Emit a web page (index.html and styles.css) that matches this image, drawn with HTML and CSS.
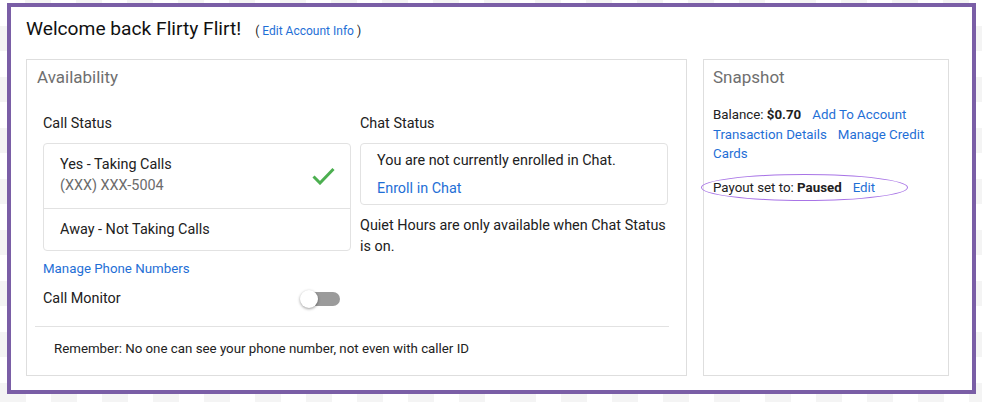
FILE: index.html
```html
<!DOCTYPE html>
<html lang="en">
<head>
<meta charset="utf-8">
<title>Welcome back</title>
<link rel="stylesheet" href="styles.css">
</head>
<body>
<div class="frame">
  <header class="welcome">
    <h1 class="title">Welcome back Flirty Flirt!</h1>
    <span class="edit">( <a class="link" href="#">Edit Account Info</a> )</span>
  </header>
  <div class="cards">
    <section class="card availability">
      <h2 class="card-title">Availability</h2>
      <div class="cols">
        <div class="col">
          <div class="label">Call Status</div>
          <div class="optbox">
            <div class="opt opt-first">
              <div class="opt-text">
                <div>Yes - Taking Calls</div>
                <div class="muted">(XXX) XXX-5004</div>
              </div>
              <svg class="check" width="23" height="18" viewBox="0 0 23 18"><path d="M1.5 9.5 L8 16 L21.5 2" fill="none" stroke="#4caf50" stroke-width="3"/></svg>
            </div>
            <div class="opt opt-second">Away - Not Taking Calls</div>
          </div>
          <a class="link manage" href="#">Manage Phone Numbers</a>
          <div class="monitor">
            <span>Call Monitor</span>
            <span class="toggle"><span class="knob"></span></span>
          </div>
        </div>
        <div class="col">
          <div class="label">Chat Status</div>
          <div class="chatbox">
            <div>You are not currently enrolled in Chat.</div>
            <a class="link enroll" href="#">Enroll in Chat</a>
          </div>
          <p class="quiet">Quiet Hours are only available when Chat Status is on.</p>
        </div>
      </div>
      <div class="divider"></div>
      <p class="remember">Remember: No one can see your phone number, not even with caller ID</p>
    </section>
    <section class="card snapshot">
      <h2 class="card-title">Snapshot</h2>
      <div class="snap-lines">
        <span class="item">Balance: <b>$0.70</b></span><a class="link item" href="#">Add To Account</a>
        <a class="link item" href="#">Transaction Details</a><a class="link item" href="#">Manage Credit Cards</a>
      </div>
      <div class="payout">
        <span class="item">Payout set to: <b>Paused</b></span><a class="link" href="#">Edit</a>
        <span class="ring"></span>
      </div>
    </section>
  </div>
</div>
</body>
</html>
```
FILE: styles.css
```css
html, body {
  margin: 0;
  padding: 0;
}
body {
  width: 982px;
  height: 402px;
  overflow: hidden;
  font-family: Roboto, "Liberation Sans", Arial, sans-serif;
  color: #212121;
  background: repeating-conic-gradient(#f4f4f4 0 25%, #ffffff 0 50%) 0 0 / 51px 51px;
}
.frame {
  box-sizing: border-box;
  margin: 3px 0 0 7px;
  width: 969px;
  height: 391px;
  border: 4px solid #7a5ea6;
  background: #fff;
  padding: 10px 23px 14px 15px;
  display: flex;
  flex-direction: column;
}
.welcome {
  display: flex;
  align-items: center;
  height: 24px;
  margin-bottom: 18px;
}
.title {
  margin: 0;
  font-size: 19.2px;
  font-weight: 400;
  line-height: 24px;
  color: #111;
}
.edit {
  margin-left: 14px;
  font-size: 12px;
  line-height: 16px;
  margin-top: 4px;
  color: #222;
}
.link {
  color: #1f6fd6;
  text-decoration: none;
}
.cards {
  display: flex;
  gap: 16px;
  flex: 1;
}
.card {
  box-sizing: border-box;
  border: 1px solid #dedede;
  background: #fff;
}
.availability {
  width: 661px;
  padding: 7px 16px 16px 16px;
}
.snapshot {
  width: 246px;
  padding: 7px 10px 10px 9px;
}
.card-title {
  margin: 0;
  font-size: 17px;
  font-weight: 400;
  line-height: 20px;
  color: #6f6f6f;
}
.availability .card-title {
  margin-left: -6px;
}
.cols {
  display: flex;
  gap: 9px;
  margin-top: 28px;
}
.col {
  width: 308px;
  display: flex;
  flex-direction: column;
  font-size: 14.4px;
}
.label {
  line-height: 18px;
  margin-bottom: 10px;
}
.optbox {
  border: 1px solid #e2e2e2;
  border-radius: 4px;
}
.opt {
  padding: 0 16px;
}
.opt-first {
  display: flex;
  align-items: center;
  justify-content: space-between;
  padding-top: 11px;
  padding-bottom: 12px;
  line-height: 20.5px;
  border-bottom: 1px solid #e2e2e2;
}
.muted {
  color: #6b6b6b;
}
.check {
  display: block;
  margin-right: -1px;
}
.opt-second {
  line-height: 18px;
  padding-top: 12px;
  padding-bottom: 11px;
}
.manage {
  font-size: 13.3px;
  line-height: 16px;
  margin-top: 10px;
}
.monitor {
  display: flex;
  align-items: center;
  justify-content: space-between;
  line-height: 18px;
  margin-top: 13px;
  padding-right: 11px;
}
.toggle {
  position: relative;
  width: 34px;
  height: 14px;
  border-radius: 7px;
  background: #9b9b9b;
}
.knob {
  position: absolute;
  left: -6px;
  top: -2px;
  width: 18px;
  height: 18px;
  border-radius: 50%;
  background: #fff;
  box-shadow: 0 1px 3px rgba(0, 0, 0, 0.4);
}
.chatbox {
  border: 1px solid #e2e2e2;
  border-radius: 4px;
  padding: 8px 16px 6px;
  line-height: 18px;
  display: flex;
  flex-direction: column;
  align-items: flex-start;
}
.enroll {
  margin-top: 10px;
}
.quiet {
  margin: 10px 0 0;
  line-height: 21px;
}
.divider {
  height: 1px;
  background: #e2e2e2;
  margin: 18px 0 0 -8px;
  width: 634px;
}
.remember {
  margin: 14px 0 0 11px;
  font-size: 13.3px;
  line-height: 16px;
}
.snap-lines {
  margin-top: 18px;
  font-size: 13.3px;
  line-height: 19.5px;
}
.item {
  margin-right: 11px;
}
.payout {
  position: relative;
  margin-top: 14px;
  font-size: 13.3px;
  line-height: 20px;
}
.ring {
  position: absolute;
  left: -12px;
  top: -4px;
  width: 205px;
  height: 25px;
  border: 1.5px solid #a874e6;
  border-radius: 50%;
  pointer-events: none;
}
```
